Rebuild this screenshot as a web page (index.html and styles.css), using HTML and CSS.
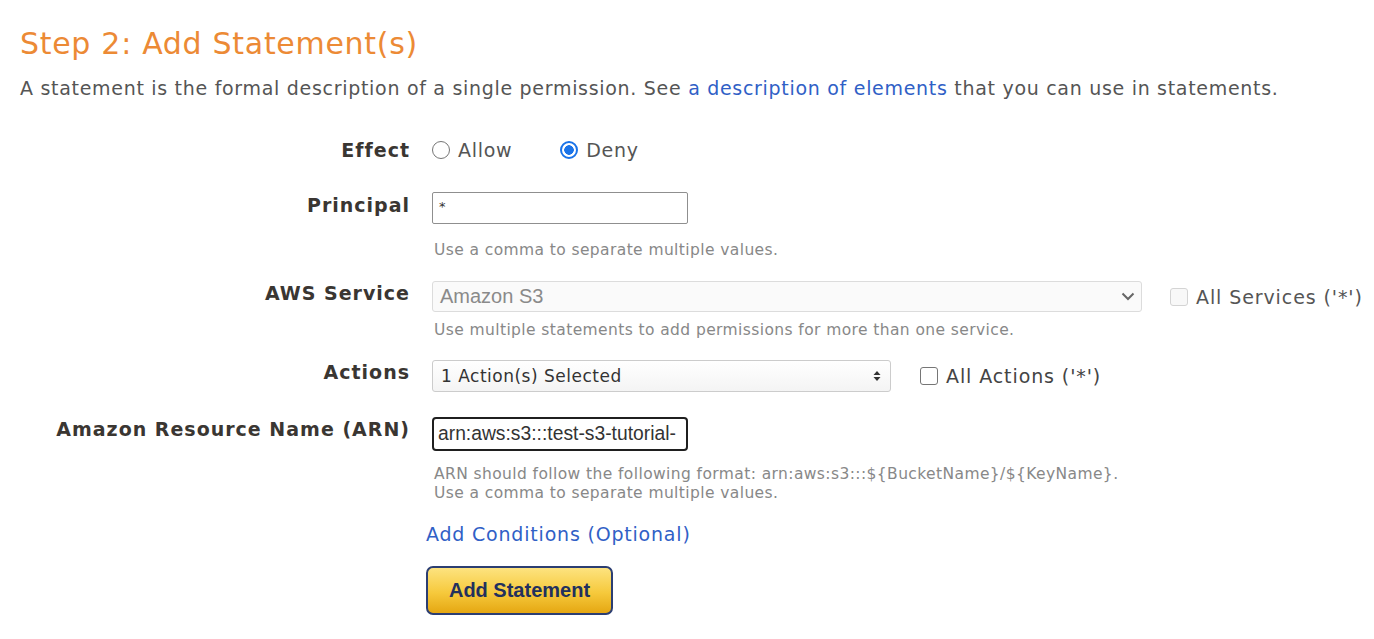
FILE: index.html
```html
<!DOCTYPE html>
<html>
<head>
<meta charset="utf-8">
<link rel="stylesheet" href="styles.css">
</head>
<body>
<div class="page">
  <h1 class="title">Step 2: Add Statement(s)</h1>
  <p class="intro">A statement is the formal description of a single permission. See <a class="link" href="#">a description of elements</a> that you can use in statements.</p>

  <div class="form">
    <div class="row row-effect">
      <div class="label">Effect</div>
      <div class="field">
        <div class="radios">
          <span class="radio-item"><span class="radio"></span><span class="radio-text">Allow</span></span>
          <span class="radio-item deny"><span class="radio checked"></span><span class="radio-text">Deny</span></span>
        </div>
      </div>
    </div>

    <div class="row row-principal">
      <div class="label">Principal</div>
      <div class="field">
        <div class="textbox principal">*</div>
        <div class="hint">Use a comma to separate multiple values.</div>
      </div>
    </div>

    <div class="row row-service">
      <div class="label">AWS Service</div>
      <div class="field">
        <div class="inline">
          <div class="select service">
            <span class="select-text">Amazon S3</span>
            <svg class="chev" width="14" height="9" viewBox="0 0 14 9"><path d="M1.5 1.5 L7 7 L12.5 1.5" fill="none" stroke="#666" stroke-width="2"/></svg>
          </div>
          <span class="check-item disabled"><span class="checkbox"></span><span class="check-text">All Services ('*')</span></span>
        </div>
        <div class="hint">Use multiple statements to add permissions for more than one service.</div>
      </div>
    </div>

    <div class="row row-actions">
      <div class="label">Actions</div>
      <div class="field">
        <div class="inline">
          <div class="select actions">
            <span class="select-text">1 Action(s) Selected</span>
            <svg class="updown" width="8" height="12" viewBox="0 0 8 12"><path d="M4 1 L7.5 5 L0.5 5 Z M4 11 L7.5 7 L0.5 7 Z" fill="#333"/></svg>
          </div>
          <span class="check-item"><span class="checkbox"></span><span class="check-text">All Actions ('*')</span></span>
        </div>
      </div>
    </div>

    <div class="row row-arn">
      <div class="label">Amazon Resource Name (ARN)</div>
      <div class="field">
        <div class="textbox arn"><span class="arn-text">arn:aws:s3:::test-s3-tutorial-</span></div>
        <div class="hint two">ARN should follow the following format: arn:aws:s3:::${BucketName}/${KeyName}.<br>Use a comma to separate multiple values.</div>
      </div>
    </div>

    <div class="row row-cond">
      <div class="label"></div>
      <div class="field field-wide">
        <a class="link cond" href="#">Add Conditions (Optional)</a>
        <button class="btn">Add Statement</button>
      </div>
    </div>
  </div>
</div>
</body>
</html>
```

FILE: styles.css
```css
html, body {
  margin: 0;
  padding: 0;
  background: #ffffff;
}
body {
  font-family: "DejaVu Sans", Verdana, sans-serif;
  color: #444444;
}
.page {
  padding: 25px 0 0 20px;
}
.title {
  margin: 0;
  font-weight: normal;
  font-size: 30px;
  letter-spacing: 0.7px;
  line-height: 38px;
  color: #ec8a35;
}
.intro {
  margin: 13px 0 0 0;
  font-size: 19px;
  letter-spacing: 0.7px;
  line-height: 24px;
  color: #555555;
}
.link {
  color: #3060c6;
  text-decoration: none;
}
.form {
  margin-top: 38px;
  display: flex;
  flex-direction: column;
}
.row {
  display: grid;
  grid-template-columns: 390px 1fr;
  column-gap: 22px;
}
.label {
  text-align: right;
  font-weight: bold;
  font-size: 19px;
  letter-spacing: 1px;
  line-height: 24px;
  color: #3a3632;
}
.field {
  display: flex;
  flex-direction: column;
  align-items: flex-start;
}
.radios {
  display: flex;
  align-items: center;
  height: 24px;
}
.radio-item {
  display: inline-flex;
  align-items: center;
  font-size: 19px;
  letter-spacing: 0.7px;
  color: #555555;
}
.radio-item.deny {
  margin-left: 48px;
}
.radio {
  width: 18px;
  height: 18px;
  border: 1.5px solid #767676;
  border-radius: 50%;
  box-sizing: border-box;
  margin-right: 8px;
  background: #fff;
}
.radio.checked {
  border: 2px solid #1a73e8;
  background: radial-gradient(circle, #1a73e8 0 4.5px, #ffffff 5px);
}
.row-principal {
  margin-top: 30px;
}
.row-principal .label {
  margin-top: 1px;
}
.textbox {
  box-sizing: border-box;
  width: 256px;
  border: 1px solid #8f8f8f;
  border-radius: 2px;
  background: #fff;
}
.textbox.principal {
  height: 32px;
  font-size: 13px;
  padding: 6px 0 0 6px;
  color: #333;
}
.hint {
  font-size: 15.5px;
  letter-spacing: 0.4px;
  line-height: 19px;
  color: #888888;
  margin: 17px 0 0 2px;
  white-space: nowrap;
}
.row-service {
  margin-top: 21px;
}
.inline {
  display: flex;
  align-items: center;
  white-space: nowrap;
}
.select {
  box-sizing: border-box;
  display: flex;
  align-items: center;
  justify-content: space-between;
  border-radius: 3px;
  background: #fff;
  flex-shrink: 0;
}
.select.service {
  width: 710px;
  height: 31px;
  border: 1px solid #dcdcdc;
  padding: 0 6px 0 7px;
  background: #fafafa;
}
.select.service .select-text {
  font-family: "Liberation Sans", Arial, sans-serif;
  font-size: 20px;
  color: #8a8a8a;
}
.check-item {
  display: inline-flex;
  align-items: center;
  font-size: 19px;
  letter-spacing: 0.9px;
  color: #444444;
  flex-shrink: 0;
  white-space: nowrap;
}
.row-service .check-item {
  margin-left: 28px;
}
.check-item.disabled .check-text {
  color: #555555;
}
.checkbox {
  box-sizing: border-box;
  width: 18px;
  height: 18px;
  border: 1.5px solid #767676;
  border-radius: 3px;
  background: #fff;
  margin-right: 8px;
}
.check-item.disabled .checkbox {
  border-color: #d4d4d4;
  background: #f8f8f8;
}
.row-service .hint {
  margin-top: 9px;
}
.row-actions {
  margin-top: 20px;
}
.select.actions {
  width: 459px;
  height: 32px;
  border: 1px solid #cccccc;
  padding: 0 9px 0 8px;
  background: linear-gradient(#ffffff, #f4f4f4);
}
.select.actions .select-text {
  font-size: 17px;
  letter-spacing: 0.5px;
  color: #333;
}
.row-actions .check-item {
  margin-left: 29px;
}
.row-arn {
  margin-top: 25px;
}
.textbox.arn {
  height: 34px;
  border: 2px solid #1f1f1f;
  border-radius: 4px;
  padding: 0 0 0 4px;
  overflow: hidden;
  white-space: nowrap;
  display: flex;
  align-items: center;
}
.arn-text {
  font-family: "Liberation Sans", Arial, sans-serif;
  font-size: 19.3px;
  color: #333;
}
.hint.two {
  margin-top: 14px;
  line-height: 19px;
}
.row-cond {
  margin-top: 19px;
}
.field-wide {
  margin-left: -6px;
}
.cond {
  font-size: 19px;
  letter-spacing: 0.8px;
  line-height: 24px;
}
.btn {
  margin-top: 20px;
  box-sizing: border-box;
  width: 187px;
  height: 49px;
  border: 2px solid #2c3e72;
  border-radius: 7px;
  background: linear-gradient(#fde37f, #f6c93c 55%, #e5a712);
  font-family: "Liberation Sans", Arial, sans-serif;
  font-weight: bold;
  font-size: 20px;
  color: #22305e;
  padding: 0;
}
```
